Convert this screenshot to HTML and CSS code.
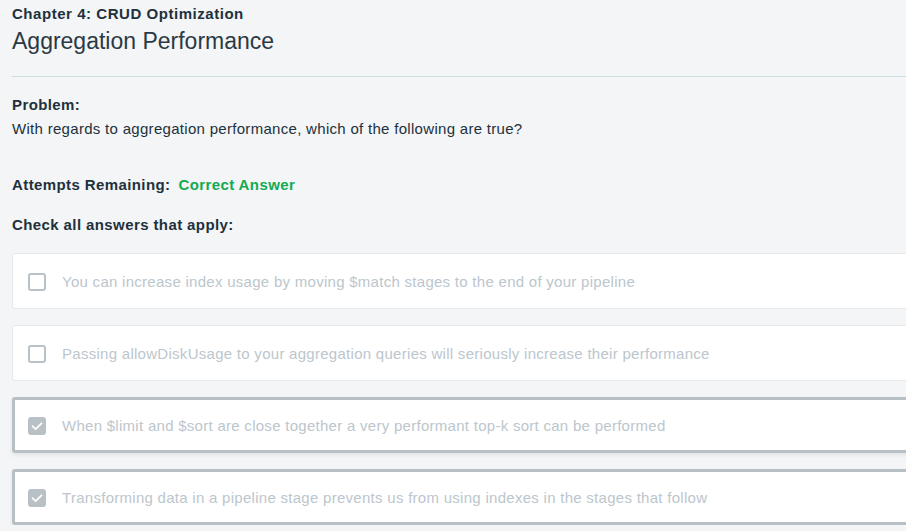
FILE: index.html
```html
<!DOCTYPE html>
<html lang="en">
<head>
<meta charset="utf-8">
<title>Aggregation Performance</title>
<link rel="stylesheet" href="styles.css">
</head>
<body>
<main class="page">
  <header class="head">
    <div class="chapter">Chapter 4: CRUD Optimization</div>
    <h1 class="title">Aggregation Performance</h1>
  </header>
  <section class="problem">
    <div class="label">Problem:</div>
    <p class="question">With regards to aggregation performance, which of the following are true?</p>
  </section>
  <div class="attempts"><span class="label">Attempts Remaining:</span><span class="correct">Correct Answer</span></div>
  <div class="label instr">Check all answers that apply:</div>
  <ul class="answers">
    <li class="answer"><span class="box"></span><span class="text">You can increase index usage by moving $match stages to the end of your pipeline</span></li>
    <li class="answer"><span class="box"></span><span class="text">Passing allowDiskUsage to your aggregation queries will seriously increase their performance</span></li>
    <li class="answer selected"><span class="box"><svg viewBox="0 0 18 18" width="18" height="18"><path d="M4.5 9.2 L7.6 12.2 L13.5 6.3" fill="none" stroke="#fff" stroke-width="1.8" stroke-linecap="round" stroke-linejoin="round"/></svg></span><span class="text">When $limit and $sort are close together a very performant top-k sort can be performed</span></li>
    <li class="answer selected"><span class="box"><svg viewBox="0 0 18 18" width="18" height="18"><path d="M4.5 9.2 L7.6 12.2 L13.5 6.3" fill="none" stroke="#fff" stroke-width="1.8" stroke-linecap="round" stroke-linejoin="round"/></svg></span><span class="text">Transforming data in a pipeline stage prevents us from using indexes in the stages that follow</span></li>
  </ul>
</main>
</body>
</html>
```
FILE: styles.css
```css
html, body {
  margin: 0;
  padding: 0;
  background: #f4f5f7;
  overflow: hidden;
}
body {
  font-family: "Liberation Sans", Arial, sans-serif;
  color: #21313c;
}
.page {
  padding: 5px 0 0 12px;
  width: 920px;
}
.chapter {
  font-size: 15px;
  font-weight: bold;
  line-height: 18px;
  letter-spacing: 0.54px;
}
.title {
  font-size: 23px;
  font-weight: normal;
  line-height: 30px;
  margin: 3px 0 0;
  padding-bottom: 20px;
  border-bottom: 1px solid #c9e1e0;
  color: #2a3a44;
}
.problem {
  margin-top: 19px;
}
.label {
  font-size: 15px;
  font-weight: bold;
  line-height: 18px;
  letter-spacing: 0.4px;
}
.question {
  font-size: 15px;
  letter-spacing: 0.3px;
  margin: 6px 0 0;
  line-height: 18px;
}
.attempts {
  margin-top: 38px;
  display: flex;
  gap: 8px;
  font-size: 15px;
  line-height: 18px;
}
.correct {
  color: #13aa52;
  font-weight: bold;
  letter-spacing: 0.4px;
}
.instr {
  margin-top: 22px;
}
.answers {
  list-style: none;
  margin: 19px 0 0;
  padding: 0;
  display: flex;
  flex-direction: column;
  gap: 16px;
}
.answer {
  height: 56px;
  box-sizing: border-box;
  background: #fff;
  border: 1px solid #e7eaec;
  border-radius: 3px;
  display: flex;
  align-items: center;
  padding-left: 15px;
  gap: 16px;
  font-size: 15px;
  letter-spacing: 0.28px;
  color: #bcc6cd;
}
.answer.selected {
  border: 3px solid #b7c0c4;
  padding-left: 13px;
  box-shadow: 0 2px 4px rgba(0, 0, 0, 0.08);
}
.box {
  width: 18px;
  height: 18px;
  box-sizing: border-box;
  border: 2px solid #b8c1c5;
  border-radius: 3px;
  flex: none;
  position: relative;
  top: 1px;
}
.selected .box {
  background: #b8c1c5;
  border: none;
}
.box svg {
  display: block;
}
.text {
  white-space: nowrap;
}
```
